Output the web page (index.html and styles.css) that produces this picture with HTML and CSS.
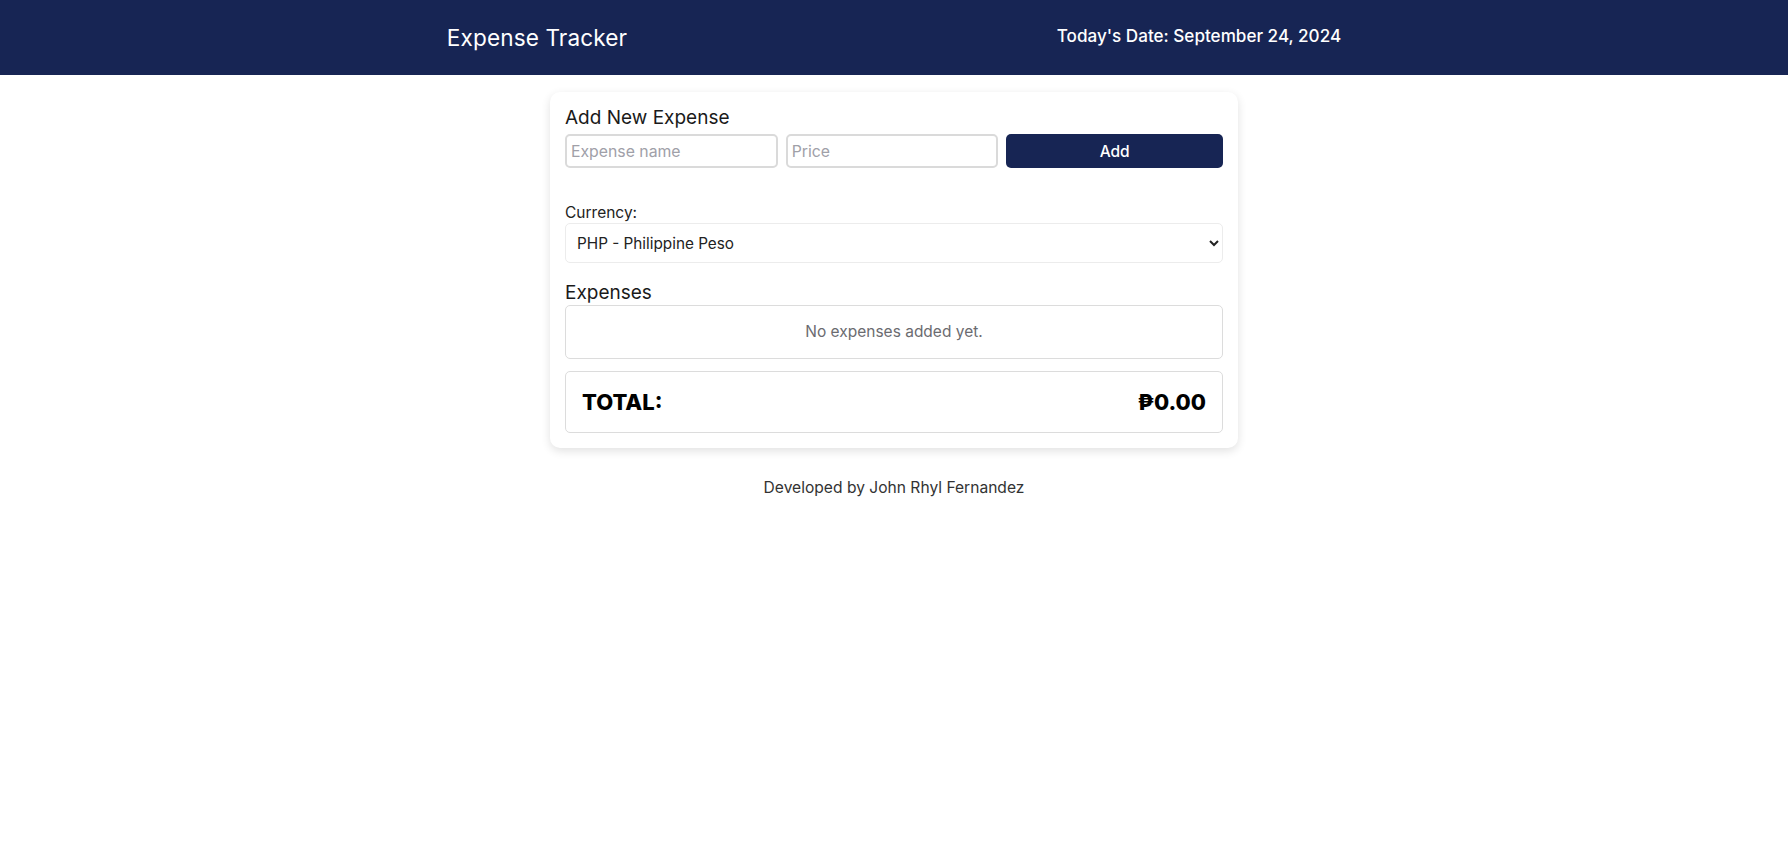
FILE: index.html
```html
<!DOCTYPE html>
<html lang="en">
<head>
<meta charset="UTF-8">
<title>Expense Tracker</title>
<link rel="stylesheet" href="styles.css">
</head>
<body>
<header class="topbar">
  <h1 class="brand">Expense Tracker</h1>
  <div class="today">Today's Date: September 24, 2024</div>
</header>
<main class="card">
  <h2 class="section-title">Add New Expense</h2>
  <div class="add-row">
    <input class="field" type="text" placeholder="Expense name">
    <input class="field" type="text" placeholder="Price">
    <button class="add-btn" type="button">Add</button>
  </div>
  <label class="currency-label" for="currency">Currency:</label>
  <select class="currency" id="currency">
    <option>PHP - Philippine Peso</option>
  </select>
  <h2 class="section-title expenses-title">Expenses</h2>
  <div class="list-box">No expenses added yet.</div>
  <div class="total-box">
    <span>TOTAL:</span>
    <span>₱0.00</span>
  </div>
</main>
<footer class="credit">Developed by John Rhyl Fernandez</footer>
</body>
</html>
```
FILE: styles.css
```css
* { box-sizing: border-box; }
body {
  margin: 0;
  font-family: Inter, "Open Sans", sans-serif;
  color: #222;
  background: #fff;
}
.topbar {
  height: 75px;
  padding: 0 232px;
  background: #172554;
  color: #fff;
  display: flex;
  align-items: center;
  justify-content: space-around;
}
.brand {
  margin: 0;
  font-size: 22.6px;
  font-weight: 400;
  letter-spacing: 0.1px;
}
.today {
  font-size: 17.1px;
  font-weight: 500;
  margin-top: -4px;
}
.card {
  width: 688px;
  margin: 17px auto 0;
  padding: 12px 15px 15px;
  background: #fff;
  border-radius: 10px;
  box-shadow: 0 3px 10px rgba(0, 0, 0, 0.12);
}
.section-title {
  margin: 0;
  font-size: 19px;
  font-weight: 400;
  line-height: 28px;
  color: #1a1a1a;
}
.add-row {
  display: flex;
  gap: 8px;
  margin-top: 2px;
}
.field {
  flex: 1 1 0;
  min-width: 0;
  height: 34px;
  border: 2px solid #dadada;
  border-radius: 5px;
  padding: 0 4px;
  font-family: inherit;
  font-size: 15.8px;
  color: #222;
}
.field::placeholder { color: #a0a0a8; }
.add-btn {
  flex: 1.02 1 0;
  min-width: 0;
  height: 34px;
  border: none;
  border-radius: 5px;
  background: #172554;
  color: #fff;
  font-family: inherit;
  font-size: 15.5px;
  font-weight: 500;
}
.currency-label {
  display: block;
  margin-top: 34px;
  font-size: 15.5px;
  line-height: 21px;
  color: #222;
}
.currency {
  display: block;
  width: 100%;
  height: 40px;
  border: 1px solid #ececec;
  border-radius: 5px;
  padding: 0 7px;
  background: #fff;
  font-family: inherit;
  font-size: 15.3px;
  color: #222;
}
.expenses-title {
  margin-top: 17px;
  line-height: 25px;
}
.list-box {
  border: 1px solid #dcdcdc;
  border-radius: 5px;
  padding: 15px;
  text-align: center;
  font-size: 15.5px;
  line-height: 22px;
  color: #6b6b70;
}
.total-box {
  margin-top: 12px;
  display: flex;
  justify-content: space-between;
  align-items: center;
  border: 1px solid #dcdcdc;
  border-radius: 5px;
  padding: 15px 16px;
  font-size: 22px;
  line-height: 30px;
  font-weight: 800;
  color: #000;
}
.credit {
  margin-top: 29px;
  text-align: center;
  font-size: 15.6px;
  line-height: 22px;
  color: #333;
}
```
